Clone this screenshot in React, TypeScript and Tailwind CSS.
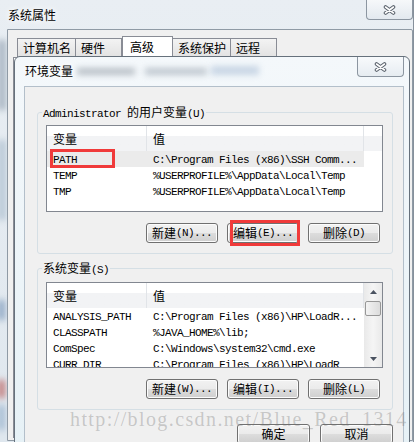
import React from "react"

const cjk = /([\u3000-\u9fff\uff00-\uffef]+)/

// SimSun-like mixing: CJK at 12px, latin at 6px per char
function Txt({ s }: { s: string }) {
  return (
    <>
      {s.split(cjk).map((p, i) =>
        p === "" ? null : cjk.test(p) ? (
          <span key={i} className="font-['Noto_Sans_CJK_SC',sans-serif] text-[12px] tracking-normal">
            {p}
          </span>
        ) : (
          <span key={i} className="font-['Liberation_Mono',monospace] text-[11px] tracking-[-0.6px]">
            {p}
          </span>
        )
      )}
    </>
  )
}

const userVars = [
  ["PATH", "C:\\Program Files (x86)\\SSH Comm..."],
  ["TEMP", "%USERPROFILE%\\AppData\\Local\\Temp"],
  ["TMP", "%USERPROFILE%\\AppData\\Local\\Temp"],
]

const sysVars = [
  ["ANALYSIS_PATH", "C:\\Program Files (x86)\\HP\\LoadR..."],
  ["CLASSPATH", "%JAVA_HOME%\\lib;"],
  ["ComSpec", "C:\\Windows\\system32\\cmd.exe"],
  ["CURR_DIR", "C:\\Program Files (x86)\\HP\\LoadR"],
]

function CloseX() {
  return (
    <svg width="13" height="10" viewBox="0 0 13 10">
      <path d="M2.5 2 L10.5 8 M2.5 8 L10.5 2" stroke="#59616b" strokeWidth="3.6" strokeLinecap="round" />
      <path d="M2.5 2 L10.5 8 M2.5 8 L10.5 2" stroke="#ffffff" strokeWidth="1.6" strokeLinecap="round" />
    </svg>
  )
}

function Btn({ label, wide }: { label: string; wide?: boolean }) {
  return (
    <div
      className={
        (wide ? "w-[73px] " : "w-[72px] ") +
        "h-[20px] shrink-0 rounded-[3px] border border-[#707070] bg-[linear-gradient(#f2f2f2_0%,#ebebeb_49%,#dddddd_50%,#cfcfcf_100%)] shadow-[inset_0_0_0_1px_#fcfcfc] flex items-center justify-center leading-[16px] whitespace-nowrap"
      }
    >
      <Txt s={label} />
    </div>
  )
}

function Arrow({ up }: { up?: boolean }) {
  return (
    <div className="h-[17px] flex items-center justify-center">
      <svg width="7" height="4" viewBox="0 0 7 4">
        <polygon points={up ? "3.5,0 7,4 0,4" : "0,0 7,0 3.5,4"} fill="#4a5260" />
      </svg>
    </div>
  )
}

function VarList({ rows, scroll, h }: { rows: string[][]; scroll?: boolean; h: string }) {
  return (
    <div className={"w-[337px] " + h + " border border-[#828790] bg-white flex overflow-hidden"}>
      <div className="w-[317px] shrink-0 flex flex-col">
        <div className="flex h-[25px] shrink-0 bg-linear-to-b from-white from-40% to-[#f2f3f5] to-40%">
          <div className="w-[100px] pl-[6px] pt-[1px] flex items-center border-r border-[#e1e4e8] leading-[16px]">
            <Txt s="变量" />
          </div>
          <div className="flex-1 pl-[6px] pt-[1px] flex items-center border-r border-[#e1e4e8] leading-[16px]">
            <Txt s="值" />
          </div>
        </div>
        {rows.map(([k, v], i) => (
          <div
            key={k}
            className={
              "flex h-[16px] shrink-0 leading-[16px] whitespace-nowrap " +
              (i === 0 && !scroll ? "bg-[#ebebeb]" : "")
            }
          >
            <div className="w-[100px] pl-[6px] overflow-hidden">
              <Txt s={k} />
            </div>
            <div className="flex-1 pl-[6px] overflow-hidden">
              <Txt s={v} />
            </div>
          </div>
        ))}
      </div>
      {scroll ? (
        <div className="flex-1 flex flex-col bg-linear-to-r from-[#e9e9e9] via-[#f5f5f5] to-[#e9e9e9]">
          <Arrow up />
          <div className="mt-[1px] mx-[1px] h-[15px] rounded-[2px] border border-[#979797] bg-linear-to-r from-[#f3f3f3] to-[#dcdcdc]" />
          <div className="flex-1" />
          <Arrow />
        </div>
      ) : (
        <div className="flex-1 h-[25px] bg-linear-to-b from-white from-40% to-[#f2f3f5] to-40%" />
      )}
    </div>
  )
}

function Group({
  title,
  children,
  pt,
}: {
  title: string
  children: React.ReactNode
  pt: string
}) {
  return (
    <div className={"relative w-[356px] border border-[#d5dfe5] rounded-[3px] pl-[8px] pb-[10px] " + pt}>
      <div className="absolute top-[-9px] left-[4px] px-[1px] bg-[#f0f0f0] leading-[16px] whitespace-nowrap">
        <Txt s={title} />
      </div>
      {children}
    </div>
  )
}

export default function App() {
  return (
    <div className="relative w-[420px] h-[442px] overflow-hidden bg-white text-black font-['Liberation_Mono','Noto_Sans_CJK_SC',monospace]">
      {/* 系统属性 window */}
      <div className="absolute left-0 top-0 w-[414px] h-[442px] bg-linear-to-b from-[#e9eef3] to-[#dfe7ee] border-r border-[#86909b]">
        {/* blurred desktop behind the glass */}
        <div className="absolute left-[-2px] top-[40px] w-[8px] h-[70px] bg-[#a9b6c3] blur-[3px]" />
        <div className="absolute left-[-2px] top-[140px] w-[8px] h-[80px] bg-[#b8c7d6] blur-[3px]" />
        <div className="absolute left-[-2px] top-[300px] w-[7px] h-[20px] bg-[#8fa7c4] blur-[3px]" />
        <div className="absolute left-[-2px] top-[380px] w-[7px] h-[18px] bg-[#c27b7b] blur-[3px]" />
        <div className="absolute left-[-2px] top-[405px] w-[7px] h-[25px] bg-[#a5bcd3] blur-[3px]" />

        <div className="relative flex justify-between h-[29px]">
          <div className="pl-[8px] pt-[7px] leading-[16px] [text-shadow:0_0_6px_#fff,0_0_10px_#fff]">
            <Txt s="系统属性" />
          </div>
          <div className="w-[47px] h-[20px] border border-t-0 border-[#8c96a1] rounded-b-[4px] bg-linear-to-b from-[#f6f8fa] to-[#e3e9ef] flex items-center justify-center">
            <CloseX />
          </div>
        </div>

        <div className="absolute left-[7px] top-[29px] w-[406px] h-[412px] border border-[#8f9aa5] rounded-tr-[2px] bg-[#f0f0f0] flex flex-col">
          <div className="flex items-end pl-[9px] pt-[6px] h-[27px]">
            {[
              ["计算机名", "w-[59px]"],
              ["硬件", "w-[46px]"],
              ["高级", "w-[51px]"],
              ["系统保护", "w-[58px]"],
              ["远程", "w-[46px]"],
            ].map(([t, w]) =>
              t === "高级" ? (
                <div key={t} className={w + " h-[21px] shrink-0 border border-b-0 border-[#898c95] bg-white pl-[7px] pt-[2px] leading-[16px]"}>
                  <Txt s={t} />
                </div>
              ) : (
                <div key={t} className={w + " h-[19px] shrink-0 border border-b-0 border-l-0 first:border-l border-[#898c95] bg-linear-to-b from-[#f3f3f3] to-[#e2e2e2] pl-[5px] pt-[1px] leading-[16px]"}>
                  <Txt s={t} />
                </div>
              )
            )}
          </div>
          <div className="flex-1 mx-[5px] mb-[2px] border border-[#898c95] bg-white" />
        </div>
      </div>

      {/* 环境变量 dialog */}
      <div className="absolute left-[14px] top-[56px] w-[396px] h-[400px] rounded-t-[6px] border border-[#66717c] bg-linear-to-b from-[#f4f8fb] to-[#e6f1f6] flex flex-col">
        <div className="absolute left-[62px] top-[11px] w-[58px] h-[7px] bg-[#7e8893] opacity-50 blur-[3px]" />
        <div className="absolute left-[130px] top-[11px] w-[62px] h-[7px] bg-[#8a96a3] opacity-50 blur-[3px]" />
        <div className="absolute left-[196px] top-[9px] w-[48px] h-[9px] bg-[#9db4cf] opacity-50 blur-[3px]" />

        <div className="relative flex justify-between h-[29px] shrink-0">
          <div className="pl-[10px] pt-[6px] leading-[16px] [text-shadow:0_0_6px_#fff,0_0_10px_#fff]">
            <Txt s="环境变量" />
          </div>
          <div className="mr-[5px] w-[47px] h-[20px] border border-t-0 border-[#8c96a1] rounded-b-[4px] bg-linear-to-b from-[#f8fafc] to-[#e6ecf1] flex items-center justify-center">
            <CloseX />
          </div>
        </div>

        <div className="relative ml-[9px] w-[380px] flex-1 border border-[#b3bfca] bg-[#f0f0f0] flex flex-col pl-[12px]">
          <div className="mt-[25px]">
            <Group title="Administrator 的用户变量(U)" pt="pt-[12px]">
              <VarList rows={userVars} h="h-[87px]" />
              <div className="mt-[11px] pl-[100px] flex gap-[9px]">
                <Btn label="新建(N)..." />
                <Btn label="编辑(E)..." />
                <Btn label="删除(D)" />
              </div>
            </Group>
          </div>
          <div className="mt-[14px]">
            <Group title="系统变量(S)" pt="pt-[13px]">
              <VarList rows={sysVars} scroll h="h-[86px]" />
              <div className="mt-[11px] pl-[100px] flex gap-[9px]">
                <Btn label="新建(W)..." />
                <Btn label="编辑(I)..." />
                <Btn label="删除(L)" />
              </div>
            </Group>
          </div>
          <div className="mt-[14px] w-[356px] flex justify-end gap-[10px]">
            <Btn label="确定" wide />
            <Btn label="取消" wide />
          </div>
        </div>
      </div>

      {/* markup drawn over the screenshot */}
      <div className="absolute left-[50px] top-[149px] w-[65px] h-[19px] border-[3px] border-[#f03a3a]" />
      <div className="absolute left-[230px] top-[220px] w-[70px] h-[26px] border-[3px] border-[#f03a3a]" />

      <div className="absolute left-[70px] top-[409px] whitespace-nowrap pointer-events-none font-['Liberation_Serif',serif] text-[20px] leading-[20px] tracking-[1.4px] text-[rgba(110,110,110,0.32)]">
        http://blog.csdn.net/Blue_Red_1314
      </div>
    </div>
  )
}
